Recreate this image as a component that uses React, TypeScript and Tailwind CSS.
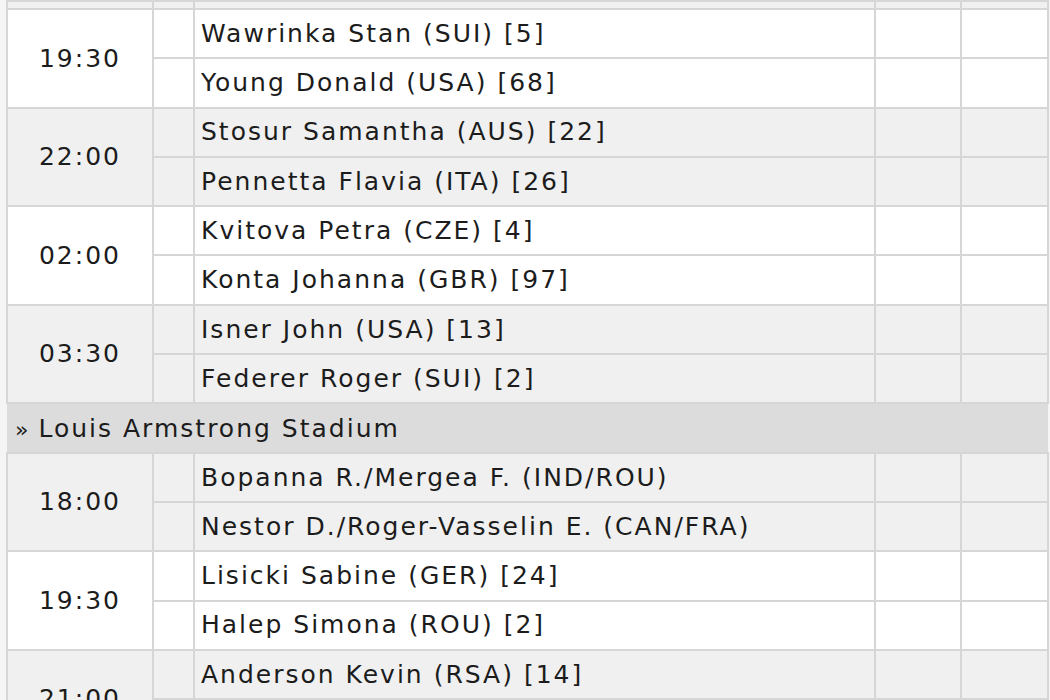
import React from 'react';

type Match = { time: string; grey: boolean; players: [string, string] };
type Block = { court?: string; matches: Match[] };

const blocks: Block[] = [
  {
    matches: [
      { time: '19:30', grey: false, players: ['Wawrinka Stan (SUI) [5]', 'Young Donald (USA) [68]'] },
      { time: '22:00', grey: true, players: ['Stosur Samantha (AUS) [22]', 'Pennetta Flavia (ITA) [26]'] },
      { time: '02:00', grey: false, players: ['Kvitova Petra (CZE) [4]', 'Konta Johanna (GBR) [97]'] },
      { time: '03:30', grey: true, players: ['Isner John (USA) [13]', 'Federer Roger (SUI) [2]'] },
    ],
  },
  {
    court: 'Louis Armstrong Stadium',
    matches: [
      { time: '18:00', grey: true, players: ['Bopanna R./Mergea F. (IND/ROU)', 'Nestor D./Roger-Vasselin E. (CAN/FRA)'] },
      { time: '19:30', grey: false, players: ['Lisicki Sabine (GER) [24]', 'Halep Simona (ROU) [2]'] },
      { time: '21:00', grey: true, players: ['Anderson Kevin (RSA) [14]', 'Simon Gilles (FRA) [11]'] },
    ],
  },
];

const cell = 'border-2 border-[#d6d6d6]';

export default function App() {
  return (
    <div className="w-[1050px] h-[700px] overflow-hidden bg-[#f5f5f5] pl-[6px]" style={{ fontFamily: '"DejaVu Sans", Verdana, sans-serif' }}>
      <table className="w-[1041px] table-fixed border-collapse text-[25px] tracking-[2px] text-[#1c1c1c]">
        <colgroup>
          <col className="w-[146px]" />
          <col className="w-[41px]" />
          <col className="w-[681px]" />
          <col className="w-[86px]" />
          <col className="w-[87px]" />
        </colgroup>
        <tbody>
          <tr className="h-[8px] bg-[#f0f0f0]">
            <td className={cell}></td>
            <td className={cell}></td>
            <td className={cell}></td>
            <td className={cell}></td>
            <td className={cell}></td>
          </tr>
          {blocks.map((b, bi) => (
            <React.Fragment key={bi}>
              {b.court && (
                <tr className="h-[49.3px] bg-[#dcdcdc]">
                  <td colSpan={5} className="border-y-2 border-[#d6d6d6] pl-[8px] leading-none">
                    <span className="text-[22px] tracking-normal mr-[10px]">»</span>
                    {b.court}
                  </td>
                </tr>
              )}
              {b.matches.map((m, mi) => {
                const bg = m.grey ? 'bg-[#f0f0f0]' : 'bg-white';
                return (
                  <React.Fragment key={mi}>
                    <tr className={`h-[49.3px] ${bg}`}>
                      <td rowSpan={2} className={`${cell} text-center align-middle`}>{m.time}</td>
                      <td className={cell}></td>
                      <td className={`${cell} pl-[6px] whitespace-nowrap`}>{m.players[0]}</td>
                      <td className={cell}></td>
                      <td className={cell}></td>
                    </tr>
                    <tr className={`h-[49.3px] ${bg}`}>
                      <td className={cell}></td>
                      <td className={`${cell} pl-[6px] whitespace-nowrap`}>{m.players[1]}</td>
                      <td className={cell}></td>
                      <td className={cell}></td>
                    </tr>
                  </React.Fragment>
                );
              })}
            </React.Fragment>
          ))}
        </tbody>
      </table>
    </div>
  );
}
